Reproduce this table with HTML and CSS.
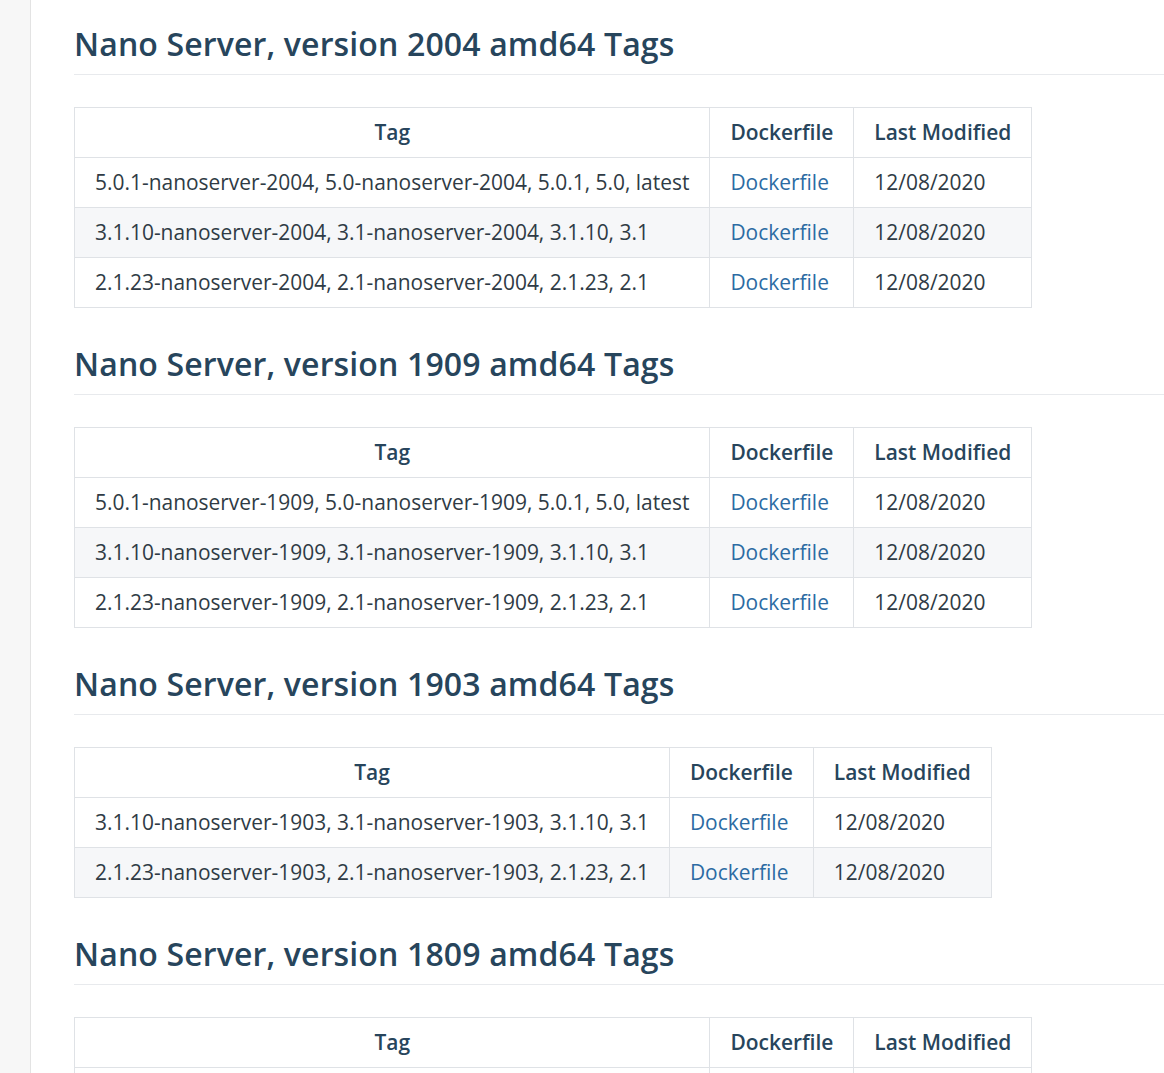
FILE: index.html
```html
<!DOCTYPE html>
<html lang="en">
<head>
<meta charset="utf-8">
<title>Nano Server Tags</title>
<link rel="stylesheet" href="styles.css">
</head>
<body>
<div class="layout">
  <aside class="sidebar"></aside>
  <main class="content">
    <h2 class="section-title">Nano Server, version 2004 amd64 Tags</h2>
    <table class="tags">
      <thead><tr><th>Tag</th><th>Dockerfile</th><th>Last Modified</th></tr></thead>
      <tbody>
        <tr><td>5.0.1-nanoserver-2004, 5.0-nanoserver-2004, 5.0.1, 5.0, latest</td><td><a href="#">Dockerfile</a></td><td>12/08/2020</td></tr>
        <tr><td>3.1.10-nanoserver-2004, 3.1-nanoserver-2004, 3.1.10, 3.1</td><td><a href="#">Dockerfile</a></td><td>12/08/2020</td></tr>
        <tr><td>2.1.23-nanoserver-2004, 2.1-nanoserver-2004, 2.1.23, 2.1</td><td><a href="#">Dockerfile</a></td><td>12/08/2020</td></tr>
      </tbody>
    </table>

    <h2 class="section-title">Nano Server, version 1909 amd64 Tags</h2>
    <table class="tags">
      <thead><tr><th>Tag</th><th>Dockerfile</th><th>Last Modified</th></tr></thead>
      <tbody>
        <tr><td>5.0.1-nanoserver-1909, 5.0-nanoserver-1909, 5.0.1, 5.0, latest</td><td><a href="#">Dockerfile</a></td><td>12/08/2020</td></tr>
        <tr><td>3.1.10-nanoserver-1909, 3.1-nanoserver-1909, 3.1.10, 3.1</td><td><a href="#">Dockerfile</a></td><td>12/08/2020</td></tr>
        <tr><td>2.1.23-nanoserver-1909, 2.1-nanoserver-1909, 2.1.23, 2.1</td><td><a href="#">Dockerfile</a></td><td>12/08/2020</td></tr>
      </tbody>
    </table>

    <h2 class="section-title">Nano Server, version 1903 amd64 Tags</h2>
    <table class="tags">
      <thead><tr><th>Tag</th><th>Dockerfile</th><th>Last Modified</th></tr></thead>
      <tbody>
        <tr><td>3.1.10-nanoserver-1903, 3.1-nanoserver-1903, 3.1.10, 3.1</td><td><a href="#">Dockerfile</a></td><td>12/08/2020</td></tr>
        <tr><td>2.1.23-nanoserver-1903, 2.1-nanoserver-1903, 2.1.23, 2.1</td><td><a href="#">Dockerfile</a></td><td>12/08/2020</td></tr>
      </tbody>
    </table>

    <h2 class="section-title">Nano Server, version 1809 amd64 Tags</h2>
    <table class="tags">
      <thead><tr><th>Tag</th><th>Dockerfile</th><th>Last Modified</th></tr></thead>
      <tbody>
        <tr><td>5.0.1-nanoserver-1809, 5.0-nanoserver-1809, 5.0.1, 5.0, latest</td><td><a href="#">Dockerfile</a></td><td>12/08/2020</td></tr>
        <tr><td>3.1.10-nanoserver-1809, 3.1-nanoserver-1809, 3.1.10, 3.1</td><td><a href="#">Dockerfile</a></td><td>12/08/2020</td></tr>
      </tbody>
    </table>
  </main>
</div>
</body>
</html>
```

FILE: styles.css
```css
html, body {
  margin: 0;
  padding: 0;
  background: #ffffff;
  overflow: hidden;
}

body {
  font-family: "Open Sans", "Noto Sans", "Liberation Sans", sans-serif;
  color: #2f3b45;
  height: 1073px;
}

.layout {
  display: flex;
  min-height: 1073px;
}

.sidebar {
  width: 30px;
  flex: 0 0 30px;
  background: #f7f7f7;
  border-right: 1px solid #e3e3e3;
}

.content {
  flex: 1;
  padding: 23px 0 0 43px;
  min-width: 0;
}

.section-title {
  margin: 35px -20px 32px 0;
  padding: 0 0 10px 0;
  font-size: 32px;
  line-height: 41px;
  font-weight: 600;
  letter-spacing: 0.14px;
  color: #27455c;
  border-bottom: 1px solid #e8eaed;
  white-space: nowrap;
}

.section-title:first-child {
  margin-top: 0;
}

.tags {
  border-collapse: collapse;
  font-size: 20.94px;
  line-height: 29px;
  color: #2f3b45;
}

.tags th,
.tags td {
  border: 1px solid #dfe2e6;
  padding: 10px 20px;
  text-align: left;
  white-space: nowrap;
}

.tags th {
  font-weight: 600;
  color: #27455c;
}

.tags th:first-child {
  text-align: center;
}

.tags tbody tr:nth-child(even) {
  background: #f6f7f9;
}

.tags a {
  color: #2c6ba3;
  text-decoration: none;
}
```
